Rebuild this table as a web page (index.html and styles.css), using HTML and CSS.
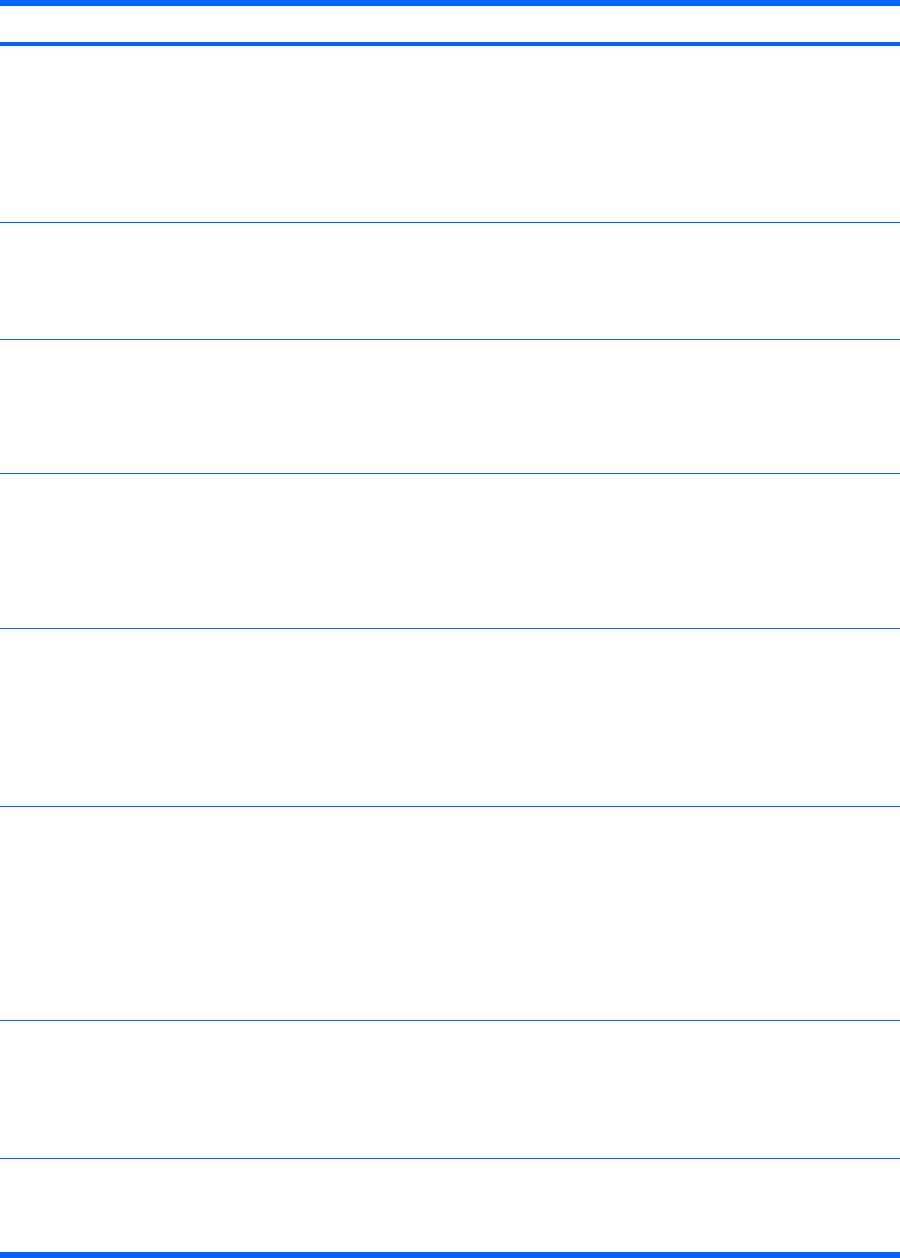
FILE: index.html
```html
<!DOCTYPE html>
<html lang="en">
<head>
    <meta charset="UTF-8">
    <title>Table</title>
    <link rel="stylesheet" href="styles.css">
</head>
<body>
    <div class="sheet">
        <div class="row head"><div class="cell"></div><div class="cell"></div></div>
        <div class="row r1"><div class="cell"></div><div class="cell"></div></div>
        <div class="row r2"><div class="cell"></div><div class="cell"></div></div>
        <div class="row r3"><div class="cell"></div><div class="cell"></div></div>
        <div class="row r4"><div class="cell"></div><div class="cell"></div></div>
        <div class="row r5"><div class="cell"></div><div class="cell"></div></div>
        <div class="row r6"><div class="cell"></div><div class="cell"></div></div>
        <div class="row r7"><div class="cell"></div><div class="cell"></div></div>
        <div class="row r8 last"><div class="cell"></div><div class="cell"></div></div>
    </div>
</body>
</html>
```

FILE: styles.css
```css
body {
    margin: 0;
    background: #fff;
    font-family: "Liberation Sans", Arial, sans-serif;
}
.sheet {
    width: 900px;
    border-top: 6px solid #0066ff;
    border-bottom: 6px solid #0066ff;
}
.row {
    display: grid;
    grid-template-columns: 499px 1fr;
    border-bottom: 1px solid #0066ff;
}
.head {
    border-bottom: 4px solid #0066ff;
}
.last {
    border-bottom: none;
}
.head .cell { height: 36px; }
.r1 .cell { height: 176px; }
.r2 .cell { height: 116px; }
.r3 .cell { height: 133px; }
.r4 .cell { height: 154px; }
.r5 .cell { height: 177px; }
.r6 .cell { height: 213px; }
.r7 .cell { height: 137px; }
.r8 .cell { height: 93px; }
```
